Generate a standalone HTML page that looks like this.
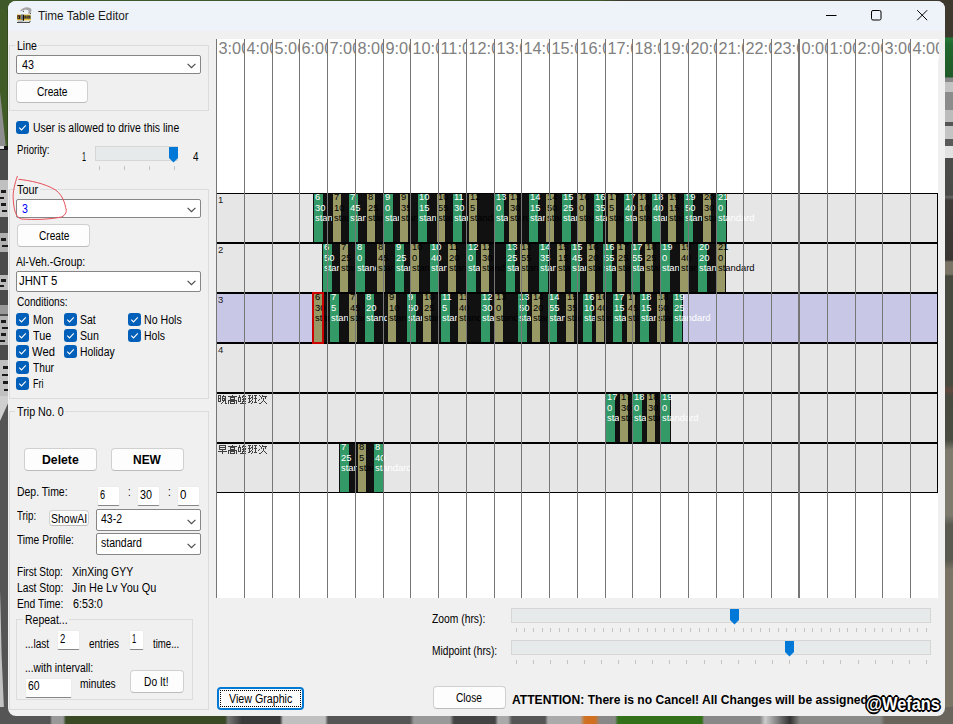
<!DOCTYPE html><html><head><meta charset="utf-8"><title>Time Table Editor</title><style>
html,body{margin:0;padding:0}
body{width:953px;height:724px;position:relative;overflow:hidden;background:#555;font-family:"Liberation Sans",sans-serif;font-size:12px;color:#000}
div,span,svg{position:absolute;box-sizing:border-box}
.t{white-space:pre;transform-origin:0 0;line-height:1}
.btn{background:#fdfdfd;border:1px solid #d0d0d0;border-bottom-color:#bcbcbc;border-radius:4px}
.cmb{background:#fff;border:1px solid #868686;border-radius:2px}
.inp{background:#fff;border:1px solid #ececec;border-bottom:1px solid #868686;border-radius:2px}
.cb{width:13px;height:13px;background:#005fb8;border-radius:3px}
.grp{border:1px solid #dcdcdc}
.hl{background:#767676;width:1px}
.trk{background:#e7eaea;border:1px solid #d6d6d6}
.tick{background:#c4c4c4;width:1px}
.row{left:216px;width:722px;height:50px;background:#e6e6e6;border:1px solid #000;overflow:hidden}
.tr{top:0;height:48px;background:#111;overflow:hidden}
.bx{left:1px;top:0;height:48px}
.tx{left:2px;top:-1.6px;font-size:9.4px;line-height:10.1px;white-space:pre}

</style></head><body>

<svg id="bgL" style="left:0;top:0" width="10" height="724" viewBox="0 0 10 724"><rect width="10" height="724" fill="#555"/><rect width="10" height="146" fill="#415c26"/><rect x="7" width="3" height="146" fill="#34491f"/><path d="M0 92L5.8 146H0Z" fill="#8e8e8e"/><rect y="146" width="10" height="4" fill="#111"/><rect y="146" width="4" height="3" fill="#ddd"/><rect y="150" width="10" height="250" fill="#4b4b4b"/><rect y="180" width="10" height="37" fill="#c0c0c0"/><rect x="1" y="190" width="5" height="3" fill="#1a1a1a"/><rect x="0" y="197" width="4" height="2" fill="#1a1a1a"/><rect x="1" y="203" width="5" height="3" fill="#1a1a1a"/><rect x="2" y="210" width="5" height="2" fill="#1a1a1a"/><rect y="233" width="10" height="19" fill="#b0b0b0"/><rect x="1" y="238" width="5" height="3" fill="#1a1a1a"/><rect x="2" y="245" width="6" height="2" fill="#1a1a1a"/><rect y="275" width="10" height="15" fill="#bbb"/><rect x="1" y="279" width="5" height="3" fill="#1a1a1a"/><rect x="0" y="285" width="4" height="2" fill="#1a1a1a"/><rect y="305" width="10" height="9" fill="#999"/><rect y="316" width="10" height="29" fill="#b4b4b4"/><rect x="1" y="320" width="5" height="3" fill="#1a1a1a"/><rect x="2" y="327" width="6" height="2" fill="#1a1a1a"/><rect x="1" y="333" width="5" height="3" fill="#1a1a1a"/><rect x="0" y="340" width="5" height="2" fill="#1a1a1a"/><rect y="360" width="10" height="36" fill="#c0c0c0"/><rect x="3" y="366" width="5" height="3" fill="#1a1a1a"/><rect x="2" y="374" width="6" height="2" fill="#1a1a1a"/><rect x="3" y="381" width="5" height="3" fill="#1a1a1a"/><rect x="4" y="389" width="4" height="2" fill="#1a1a1a"/><path d="M0 396H10V399L0 421Z" fill="#cfcfcf"/><path d="M0 590L.6 610L1.6 655L4.6 724H0Z" fill="#c2c2c2"/></svg>
<div id="bgR" style="left:944px;top:0;width:9px;height:724px;background:linear-gradient(to bottom,#3e392f 0px,#3e392f 37px,#267a38 38px,#22682e 44px,#1f5a28 77px,#8a8a8a 78px,#8a8a8a 82px,#c4c4c4 82px,#c4c4c4 92px,#8c8c8c 92px,#8c8c8c 110px,#bcbcbc 110px,#bcbcbc 122px,#555 122px,#555 126px,#c4c4c4 126px,#c4c4c4 139px,#5a5a5a 139px,#5a5a5a 146px,#e2e2e2 146px,#e2e2e2 158px,#4c4c4a 158px,#4a4a48 195px,#686664 197px,#403c3a 200px,#3a3634 260px,#7a7466 262px,#7a7466 274px,#484a40 276px,#484a40 385px,#63483e 390px,#484a40 396px,#4a4c42 440px,#7e7a6e 450px,#7e7a6e 515px,#5a5a50 525px,#5a5a50 560px,#7a7466 570px,#7a7466 724px)"></div>
<div id="bgB" style="left:0;top:707px;width:953px;height:17px;background:linear-gradient(to right,#555 0,#555 50px,#999 52px,#999 63px,#3a4a25 66px,#3a4a25 225px,#777 228px,#3a3a3a 242px,#3a3a3a 280px,#c0c0c0 283px,#c0c0c0 325px,#555 328px,#555 410px,#999 414px,#999 450px,#444 454px,#444 495px,#aaa 498px,#aaa 508px,#555 512px,#555 545px,#aaa 548px,#aaa 580px,#d07020 585px,#d07020 595px,#888 600px,#888 615px,#33701a 618px,#33701a 702px,#888 704px,#888 760px,#ccc 765px,#333 790px,#8a8a88 800px,#8a8a88 880px,#6a655c 885px,#6a655c 953px)"></div>
<div id="bgT" style="left:0;top:0;width:953px;height:9px;background:linear-gradient(to right,#40592a 0,#40592a 600px,#3e392f 620px,#3e392f 953px)"></div>
<div id="win" style="left:8px;top:1px;width:937px;height:715px;background:#f0f0f0;border-radius:8px;overflow:hidden">
<div style="left:0;top:0;width:937px;height:30px;background:#eef3f9"></div>
</div>
<svg style="left:820px;top:5px" width="115" height="22" viewBox="0 0 115 22"><g fill="none" stroke="#000" stroke-width="1"><path d="M6 10.5H16.5"/><rect x="51.5" y="5.5" width="9.5" height="9.5" rx="1.5"/><path d="M97.2 5.2L107.2 15.2M107.2 5.2L97.2 15.2"/></g></svg>
<svg style="left:16px;top:6px" width="17" height="18" viewBox="16 6 17 18"><path d="M20 10.8C22 8.2 25 6.9 27.5 7.2C30 7.5 31.8 8.8 31.5 10.5C31.3 11.8 30.5 12.8 29.5 13.6L27.8 13.4C28.8 12.3 29 11 28 10.3C26.5 9.2 23.5 9.8 21 11.4Z" fill="#a6a6a6"/><circle cx="23.4" cy="11.3" r=".6" fill="#333"/><circle cx="30.4" cy="13.3" r=".6" fill="#4a2a2a"/><rect x="17" y="14.6" width="13.6" height="5.6" fill="#d4aa2c"/><rect x="17.4" y="15.3" width="3" height="3.6" fill="#1c1a28"/><rect x="18.2" y="15.8" width="1" height="1" fill="#b03020"/><rect x="17.8" y="17.2" width="1" height="1" fill="#d8c030"/><rect x="21" y="14.4" width="1.8" height="5.2" fill="#6a7a98"/><rect x="22.9" y="14.8" width="1.1" height="6" fill="#0c0c0c"/><rect x="24.3" y="15.6" width="6.2" height="3.1" fill="#2c4034"/><rect x="24.6" y="16.6" width=".9" height="1.2" fill="#a03030"/><rect x="28" y="16.6" width="1" height="1.2" fill="#b03a30"/><rect x="26.6" y="15.2" width=".6" height="3.6" fill="#c0a030"/><rect x="24.3" y="18.9" width="6.4" height="1.3" fill="#e6c040"/><rect x="18" y="20.4" width="5" height="1.3" fill="#b8b8b8"/><path d="M17 22.4H29.6L30.2 21" fill="none" stroke="#222" stroke-width=".9"/></svg>
<div class="grp" style="left:9px;top:45px;width:200px;height:66px"></div>
<div class="grp" style="left:9px;top:189px;width:200px;height:210px"></div>
<div class="grp" style="left:9px;top:411px;width:200px;height:299px"></div>
<div class="grp" style="left:16px;top:619px;width:177px;height:81px"></div>
<div style="left:15px;top:40px;width:23px;height:12px;background:#f0f0f0"></div>
<div style="left:15px;top:184px;width:25px;height:12px;background:#f0f0f0"></div>
<div style="left:15px;top:405px;width:50px;height:12px;background:#f0f0f0"></div>
<div style="left:23px;top:613px;width:46px;height:12px;background:#f0f0f0"></div>
<div class="cmb" style="left:16px;top:55px;width:185px;height:19px"><svg style="right:4px;top:7px" width="9" height="6" viewBox="0 0 9 6"><path d="M.6 .8L4.5 4.7L8.4 .8" fill="none" stroke="#4a4a4a" stroke-width="1.15"/></svg></div>
<div class="cmb" style="left:16px;top:199px;width:185px;height:19px"><svg style="right:4px;top:7px" width="9" height="6" viewBox="0 0 9 6"><path d="M.6 .8L4.5 4.7L8.4 .8" fill="none" stroke="#4a4a4a" stroke-width="1.15"/></svg></div>
<div class="cmb" style="left:16px;top:271px;width:185px;height:21px"><svg style="right:4px;top:8px" width="9" height="6" viewBox="0 0 9 6"><path d="M.6 .8L4.5 4.7L8.4 .8" fill="none" stroke="#4a4a4a" stroke-width="1.15"/></svg></div>
<div class="cmb" style="left:96px;top:509px;width:105px;height:22px"><svg style="right:4px;top:9px" width="9" height="6" viewBox="0 0 9 6"><path d="M.6 .8L4.5 4.7L8.4 .8" fill="none" stroke="#4a4a4a" stroke-width="1.15"/></svg></div>
<div class="cmb" style="left:96px;top:533px;width:105px;height:22px"><svg style="right:4px;top:9px" width="9" height="6" viewBox="0 0 9 6"><path d="M.6 .8L4.5 4.7L8.4 .8" fill="none" stroke="#4a4a4a" stroke-width="1.15"/></svg></div>
<div class="btn" style="left:16px;top:80px;width:72px;height:23px;"></div>
<div class="btn" style="left:17px;top:224px;width:73px;height:23px;"></div>
<div class="btn" style="left:24px;top:448px;width:73px;height:23px;"></div>
<div class="btn" style="left:111px;top:448px;width:73px;height:23px;"></div>
<div class="btn" style="left:49px;top:510px;width:40px;height:16px;"></div>
<div class="btn" style="left:130px;top:670px;width:54px;height:23px;"></div>
<div class="btn" style="left:433px;top:686px;width:73px;height:23px;"></div>
<div style="left:217px;top:687px;width:87px;height:23px;background:#fdfdfd;border:2px solid #0078d4;border-radius:4px"></div>
<div style="left:220px;top:690px;width:81px;height:17px;border:1px dotted #000"></div>
<div class="inp" style="left:97px;top:486px;width:23px;height:20px"></div>
<div class="inp" style="left:137px;top:486px;width:23px;height:20px"></div>
<div class="inp" style="left:177px;top:486px;width:23px;height:20px"></div>
<div class="inp" style="left:57px;top:630px;width:23px;height:20px"></div>
<div class="inp" style="left:129px;top:630px;width:15px;height:20px"></div>
<div class="inp" style="left:25px;top:678px;width:47px;height:20px"></div>
<div class="cb" style="left:16px;top:121px"><svg width="13" height="13" viewBox="0 0 13 13" style="left:0;top:0"><path d="M3.2 6.7L5.5 9L9.8 4.4" fill="none" stroke="#fff" stroke-width="1.1"/></svg></div>
<div class="cb" style="left:16px;top:313px"><svg width="13" height="13" viewBox="0 0 13 13" style="left:0;top:0"><path d="M3.2 6.7L5.5 9L9.8 4.4" fill="none" stroke="#fff" stroke-width="1.1"/></svg></div>
<div class="cb" style="left:16px;top:329px"><svg width="13" height="13" viewBox="0 0 13 13" style="left:0;top:0"><path d="M3.2 6.7L5.5 9L9.8 4.4" fill="none" stroke="#fff" stroke-width="1.1"/></svg></div>
<div class="cb" style="left:16px;top:345px"><svg width="13" height="13" viewBox="0 0 13 13" style="left:0;top:0"><path d="M3.2 6.7L5.5 9L9.8 4.4" fill="none" stroke="#fff" stroke-width="1.1"/></svg></div>
<div class="cb" style="left:16px;top:361px"><svg width="13" height="13" viewBox="0 0 13 13" style="left:0;top:0"><path d="M3.2 6.7L5.5 9L9.8 4.4" fill="none" stroke="#fff" stroke-width="1.1"/></svg></div>
<div class="cb" style="left:16px;top:377px"><svg width="13" height="13" viewBox="0 0 13 13" style="left:0;top:0"><path d="M3.2 6.7L5.5 9L9.8 4.4" fill="none" stroke="#fff" stroke-width="1.1"/></svg></div>
<div class="cb" style="left:64px;top:313px"><svg width="13" height="13" viewBox="0 0 13 13" style="left:0;top:0"><path d="M3.2 6.7L5.5 9L9.8 4.4" fill="none" stroke="#fff" stroke-width="1.1"/></svg></div>
<div class="cb" style="left:64px;top:329px"><svg width="13" height="13" viewBox="0 0 13 13" style="left:0;top:0"><path d="M3.2 6.7L5.5 9L9.8 4.4" fill="none" stroke="#fff" stroke-width="1.1"/></svg></div>
<div class="cb" style="left:64px;top:345px"><svg width="13" height="13" viewBox="0 0 13 13" style="left:0;top:0"><path d="M3.2 6.7L5.5 9L9.8 4.4" fill="none" stroke="#fff" stroke-width="1.1"/></svg></div>
<div class="cb" style="left:128px;top:313px"><svg width="13" height="13" viewBox="0 0 13 13" style="left:0;top:0"><path d="M3.2 6.7L5.5 9L9.8 4.4" fill="none" stroke="#fff" stroke-width="1.1"/></svg></div>
<div class="cb" style="left:128px;top:329px"><svg width="13" height="13" viewBox="0 0 13 13" style="left:0;top:0"><path d="M3.2 6.7L5.5 9L9.8 4.4" fill="none" stroke="#fff" stroke-width="1.1"/></svg></div>
<div class="trk" style="left:95px;top:146px;width:83px;height:15px"></div>
<svg style="left:169px;top:147px" width="9" height="16" viewBox="0 0 9 16"><path d="M0 0H9V11L4.5 15.5L0 11Z" fill="#0078d7"/></svg>
<div class="tick" style="left:99px;top:166px;height:4px"></div>
<div class="tick" style="left:124px;top:166px;height:4px"></div>
<div class="tick" style="left:149px;top:166px;height:4px"></div>
<div class="tick" style="left:174px;top:166px;height:4px"></div>
<div class="trk" style="left:511px;top:608px;width:420px;height:15px"></div>
<div class="trk" style="left:511px;top:640px;width:420px;height:15px"></div>
<svg style="left:730px;top:609px" width="9" height="16" viewBox="0 0 9 16"><path d="M0 0H9V11L4.5 15.5L0 11Z" fill="#0078d7"/></svg>
<svg style="left:785px;top:641px" width="9" height="16" viewBox="0 0 9 16"><path d="M0 0H9V11L4.5 15.5L0 11Z" fill="#0078d7"/></svg>
<div class="tick" style="left:516px;top:628px;height:4px"></div>
<div class="tick" style="left:524px;top:628px;height:4px"></div>
<div class="tick" style="left:533px;top:628px;height:4px"></div>
<div class="tick" style="left:542px;top:628px;height:4px"></div>
<div class="tick" style="left:550px;top:628px;height:4px"></div>
<div class="tick" style="left:559px;top:628px;height:4px"></div>
<div class="tick" style="left:568px;top:628px;height:4px"></div>
<div class="tick" style="left:577px;top:628px;height:4px"></div>
<div class="tick" style="left:585px;top:628px;height:4px"></div>
<div class="tick" style="left:594px;top:628px;height:4px"></div>
<div class="tick" style="left:603px;top:628px;height:4px"></div>
<div class="tick" style="left:612px;top:628px;height:4px"></div>
<div class="tick" style="left:620px;top:628px;height:4px"></div>
<div class="tick" style="left:629px;top:628px;height:4px"></div>
<div class="tick" style="left:638px;top:628px;height:4px"></div>
<div class="tick" style="left:647px;top:628px;height:4px"></div>
<div class="tick" style="left:655px;top:628px;height:4px"></div>
<div class="tick" style="left:664px;top:628px;height:4px"></div>
<div class="tick" style="left:673px;top:628px;height:4px"></div>
<div class="tick" style="left:681px;top:628px;height:4px"></div>
<div class="tick" style="left:690px;top:628px;height:4px"></div>
<div class="tick" style="left:699px;top:628px;height:4px"></div>
<div class="tick" style="left:708px;top:628px;height:4px"></div>
<div class="tick" style="left:716px;top:628px;height:4px"></div>
<div class="tick" style="left:725px;top:628px;height:4px"></div>
<div class="tick" style="left:734px;top:628px;height:4px"></div>
<div class="tick" style="left:743px;top:628px;height:4px"></div>
<div class="tick" style="left:751px;top:628px;height:4px"></div>
<div class="tick" style="left:760px;top:628px;height:4px"></div>
<div class="tick" style="left:769px;top:628px;height:4px"></div>
<div class="tick" style="left:778px;top:628px;height:4px"></div>
<div class="tick" style="left:786px;top:628px;height:4px"></div>
<div class="tick" style="left:795px;top:628px;height:4px"></div>
<div class="tick" style="left:804px;top:628px;height:4px"></div>
<div class="tick" style="left:812px;top:628px;height:4px"></div>
<div class="tick" style="left:821px;top:628px;height:4px"></div>
<div class="tick" style="left:830px;top:628px;height:4px"></div>
<div class="tick" style="left:839px;top:628px;height:4px"></div>
<div class="tick" style="left:847px;top:628px;height:4px"></div>
<div class="tick" style="left:856px;top:628px;height:4px"></div>
<div class="tick" style="left:865px;top:628px;height:4px"></div>
<div class="tick" style="left:874px;top:628px;height:4px"></div>
<div class="tick" style="left:882px;top:628px;height:4px"></div>
<div class="tick" style="left:891px;top:628px;height:4px"></div>
<div class="tick" style="left:900px;top:628px;height:4px"></div>
<div class="tick" style="left:909px;top:628px;height:4px"></div>
<div class="tick" style="left:917px;top:628px;height:4px"></div>
<div class="tick" style="left:926px;top:628px;height:4px"></div>
<div class="tick" style="left:516px;top:660px;height:4px"></div>
<div class="tick" style="left:533px;top:660px;height:4px"></div>
<div class="tick" style="left:550px;top:660px;height:4px"></div>
<div class="tick" style="left:567px;top:660px;height:4px"></div>
<div class="tick" style="left:584px;top:660px;height:4px"></div>
<div class="tick" style="left:601px;top:660px;height:4px"></div>
<div class="tick" style="left:618px;top:660px;height:4px"></div>
<div class="tick" style="left:635px;top:660px;height:4px"></div>
<div class="tick" style="left:652px;top:660px;height:4px"></div>
<div class="tick" style="left:669px;top:660px;height:4px"></div>
<div class="tick" style="left:686px;top:660px;height:4px"></div>
<div class="tick" style="left:704px;top:660px;height:4px"></div>
<div class="tick" style="left:721px;top:660px;height:4px"></div>
<div class="tick" style="left:738px;top:660px;height:4px"></div>
<div class="tick" style="left:755px;top:660px;height:4px"></div>
<div class="tick" style="left:772px;top:660px;height:4px"></div>
<div class="tick" style="left:789px;top:660px;height:4px"></div>
<div class="tick" style="left:806px;top:660px;height:4px"></div>
<div class="tick" style="left:823px;top:660px;height:4px"></div>
<div class="tick" style="left:840px;top:660px;height:4px"></div>
<div class="tick" style="left:858px;top:660px;height:4px"></div>
<div class="tick" style="left:875px;top:660px;height:4px"></div>
<div class="tick" style="left:892px;top:660px;height:4px"></div>
<div class="tick" style="left:909px;top:660px;height:4px"></div>
<div class="tick" style="left:926px;top:660px;height:4px"></div>
<svg style="left:10px;top:172px" width="62" height="52" viewBox="10 172 62 52"><path d="M17.4 176C15 183 12.6 192 13.2 199C13.8 210 16 218 21.6 219C34 220 50 219.5 61.5 217C66 215 67 211 65.7 207.7C64 199 60.5 193.5 55.2 189.8C45 183.5 30 180.5 18.5 179.3" fill="none" stroke="#e8505a" stroke-width="1"/></svg>
<div id="grid" style="left:217px;top:39px;width:721px;height:559px;background:#fff"></div>
<div style="left:217px;top:39px;width:28px;height:20px;overflow:hidden;background:#fff"><span style="left:1.5px;top:0.5px;font-size:16.3px;line-height:16px;color:#808080;white-space:pre">3:00</span></div>
<div style="left:245px;top:39px;width:28px;height:20px;overflow:hidden;background:#fff"><span style="left:1.5px;top:0.5px;font-size:16.3px;line-height:16px;color:#808080;white-space:pre">4:00</span></div>
<div style="left:273px;top:39px;width:27px;height:20px;overflow:hidden;background:#fff"><span style="left:1.5px;top:0.5px;font-size:16.3px;line-height:16px;color:#808080;white-space:pre">5:00</span></div>
<div style="left:300px;top:39px;width:28px;height:20px;overflow:hidden;background:#fff"><span style="left:1.5px;top:0.5px;font-size:16.3px;line-height:16px;color:#808080;white-space:pre">6:00</span></div>
<div style="left:328px;top:39px;width:28px;height:20px;overflow:hidden;background:#fff"><span style="left:1.5px;top:0.5px;font-size:16.3px;line-height:16px;color:#808080;white-space:pre">7:00</span></div>
<div style="left:356px;top:39px;width:28px;height:20px;overflow:hidden;background:#fff"><span style="left:1.5px;top:0.5px;font-size:16.3px;line-height:16px;color:#808080;white-space:pre">8:00</span></div>
<div style="left:384px;top:39px;width:27px;height:20px;overflow:hidden;background:#fff"><span style="left:1.5px;top:0.5px;font-size:16.3px;line-height:16px;color:#808080;white-space:pre">9:00</span></div>
<div style="left:411px;top:39px;width:28px;height:20px;overflow:hidden;background:#fff"><span style="left:1.5px;top:0.5px;font-size:16.3px;line-height:16px;color:#808080;white-space:pre">10:00</span></div>
<div style="left:439px;top:39px;width:28px;height:20px;overflow:hidden;background:#fff"><span style="left:1.5px;top:0.5px;font-size:16.3px;line-height:16px;color:#808080;white-space:pre">11:00</span></div>
<div style="left:467px;top:39px;width:28px;height:20px;overflow:hidden;background:#fff"><span style="left:1.5px;top:0.5px;font-size:16.3px;line-height:16px;color:#808080;white-space:pre">12:00</span></div>
<div style="left:495px;top:39px;width:27px;height:20px;overflow:hidden;background:#fff"><span style="left:1.5px;top:0.5px;font-size:16.3px;line-height:16px;color:#808080;white-space:pre">13:00</span></div>
<div style="left:522px;top:39px;width:28px;height:20px;overflow:hidden;background:#fff"><span style="left:1.5px;top:0.5px;font-size:16.3px;line-height:16px;color:#808080;white-space:pre">14:00</span></div>
<div style="left:550px;top:39px;width:28px;height:20px;overflow:hidden;background:#fff"><span style="left:1.5px;top:0.5px;font-size:16.3px;line-height:16px;color:#808080;white-space:pre">15:00</span></div>
<div style="left:578px;top:39px;width:28px;height:20px;overflow:hidden;background:#fff"><span style="left:1.5px;top:0.5px;font-size:16.3px;line-height:16px;color:#808080;white-space:pre">16:00</span></div>
<div style="left:606px;top:39px;width:27px;height:20px;overflow:hidden;background:#fff"><span style="left:1.5px;top:0.5px;font-size:16.3px;line-height:16px;color:#808080;white-space:pre">17:00</span></div>
<div style="left:633px;top:39px;width:28px;height:20px;overflow:hidden;background:#fff"><span style="left:1.5px;top:0.5px;font-size:16.3px;line-height:16px;color:#808080;white-space:pre">18:00</span></div>
<div style="left:661px;top:39px;width:28px;height:20px;overflow:hidden;background:#fff"><span style="left:1.5px;top:0.5px;font-size:16.3px;line-height:16px;color:#808080;white-space:pre">19:00</span></div>
<div style="left:689px;top:39px;width:28px;height:20px;overflow:hidden;background:#fff"><span style="left:1.5px;top:0.5px;font-size:16.3px;line-height:16px;color:#808080;white-space:pre">20:00</span></div>
<div style="left:717px;top:39px;width:27px;height:20px;overflow:hidden;background:#fff"><span style="left:1.5px;top:0.5px;font-size:16.3px;line-height:16px;color:#808080;white-space:pre">21:00</span></div>
<div style="left:744px;top:39px;width:28px;height:20px;overflow:hidden;background:#fff"><span style="left:1.5px;top:0.5px;font-size:16.3px;line-height:16px;color:#808080;white-space:pre">22:00</span></div>
<div style="left:772px;top:39px;width:28px;height:20px;overflow:hidden;background:#fff"><span style="left:1.5px;top:0.5px;font-size:16.3px;line-height:16px;color:#808080;white-space:pre">23:00</span></div>
<div style="left:800px;top:39px;width:28px;height:20px;overflow:hidden;background:#fff"><span style="left:1.5px;top:0.5px;font-size:16.3px;line-height:16px;color:#808080;white-space:pre">0:00</span></div>
<div style="left:828px;top:39px;width:28px;height:20px;overflow:hidden;background:#fff"><span style="left:1.5px;top:0.5px;font-size:16.3px;line-height:16px;color:#808080;white-space:pre">1:00</span></div>
<div style="left:856px;top:39px;width:27px;height:20px;overflow:hidden;background:#fff"><span style="left:1.5px;top:0.5px;font-size:16.3px;line-height:16px;color:#808080;white-space:pre">2:00</span></div>
<div style="left:883px;top:39px;width:28px;height:20px;overflow:hidden;background:#fff"><span style="left:1.5px;top:0.5px;font-size:16.3px;line-height:16px;color:#808080;white-space:pre">3:00</span></div>
<div style="left:911px;top:39px;width:28px;height:20px;overflow:hidden;background:#fff"><span style="left:1.5px;top:0.5px;font-size:16.3px;line-height:16px;color:#808080;white-space:pre">4:00</span></div>
<div class="row" style="top:193px;background:#e6e6e6">
<span style="left:1px;top:1px;font-size:9.5px;line-height:10px;color:#222">1</span>
<div class="tr" style="left:96px;width:19px"><div class="bx" style="left:1px;width:9px;background:#339966;"></div><span class="tx" style="color:#fff">6
30
standard</span></div>
<div class="tr" style="left:115px;width:16px"><div class="bx" style="left:1px;width:8px;background:#999966;"></div><span class="tx" style="color:#000">7
10
standard</span></div>
<div class="tr" style="left:131px;width:18px"><div class="bx" style="left:1px;width:9px;background:#339966;"></div><span class="tx" style="color:#fff">7
45
standard</span></div>
<div class="tr" style="left:149px;width:17px"><div class="bx" style="left:1px;width:8px;background:#999966;"></div><span class="tx" style="color:#000">8
25
standard</span></div>
<div class="tr" style="left:166px;width:16px"><div class="bx" style="left:1px;width:9px;background:#339966;"></div><span class="tx" style="color:#fff">9
0
standard</span></div>
<div class="tr" style="left:182px;width:18px"><div class="bx" style="left:1px;width:8px;background:#999966;"></div><span class="tx" style="color:#000">9
35
standard</span></div>
<div class="tr" style="left:200px;width:19px"><div class="bx" style="left:1px;width:9px;background:#339966;"></div><span class="tx" style="color:#fff">10
15
standard</span></div>
<div class="tr" style="left:219px;width:16px"><div class="bx" style="left:1px;width:8px;background:#999966;"></div><span class="tx" style="color:#000">10
55
standard</span></div>
<div class="tr" style="left:235px;width:16px"><div class="bx" style="left:1px;width:9px;background:#339966;"></div><span class="tx" style="color:#fff">11
30
standard</span></div>
<div class="tr" style="left:251px;width:26px"><div class="bx" style="left:1px;width:8px;background:#999966;"></div><span class="tx" style="color:#000">12
5
standard</span></div>
<div class="tr" style="left:277px;width:14px"><div class="bx" style="left:1px;width:9px;background:#339966;"></div><span class="tx" style="color:#fff">13
0
standard</span></div>
<div class="tr" style="left:291px;width:20px"><div class="bx" style="left:1px;width:8px;background:#999966;"></div><span class="tx" style="color:#000">13
30
standard</span></div>
<div class="tr" style="left:311px;width:17px"><div class="bx" style="left:1px;width:9px;background:#339966;"></div><span class="tx" style="color:#fff">14
15
standard</span></div>
<div class="tr" style="left:328px;width:16px"><div class="bx" style="left:1px;width:8px;background:#999966;"></div><span class="tx" style="color:#000">14
50
standard</span></div>
<div class="tr" style="left:344px;width:16px"><div class="bx" style="left:1px;width:9px;background:#339966;"></div><span class="tx" style="color:#fff">15
25
standard</span></div>
<div class="tr" style="left:360px;width:16px"><div class="bx" style="left:1px;width:8px;background:#999966;"></div><span class="tx" style="color:#000">16
0
standard</span></div>
<div class="tr" style="left:376px;width:14px"><div class="bx" style="left:1px;width:9px;background:#339966;"></div><span class="tx" style="color:#fff">16
35
standard</span></div>
<div class="tr" style="left:390px;width:16px"><div class="bx" style="left:1px;width:8px;background:#999966;"></div><span class="tx" style="color:#000">17
5
standard</span></div>
<div class="tr" style="left:406px;width:14px"><div class="bx" style="left:1px;width:9px;background:#339966;"></div><span class="tx" style="color:#fff">17
40
standard</span></div>
<div class="tr" style="left:420px;width:14px"><div class="bx" style="left:1px;width:8px;background:#999966;"></div><span class="tx" style="color:#000">18
10
standard</span></div>
<div class="tr" style="left:434px;width:16px"><div class="bx" style="left:1px;width:9px;background:#339966;"></div><span class="tx" style="color:#fff">18
40
standard</span></div>
<div class="tr" style="left:450px;width:16px"><div class="bx" style="left:1px;width:8px;background:#999966;"></div><span class="tx" style="color:#000">19
15
standard</span></div>
<div class="tr" style="left:466px;width:19px"><div class="bx" style="left:1px;width:9px;background:#339966;"></div><span class="tx" style="color:#fff">19
50
standard</span></div>
<div class="tr" style="left:485px;width:14px"><div class="bx" style="left:1px;width:8px;background:#999966;"></div><span class="tx" style="color:#000">20
30
standard</span></div>
<div class="tr" style="left:499px;width:11px;overflow:visible"><div class="bx" style="left:1px;width:9px;background:#339966;"></div><span class="tx" style="color:#fff">21
0
standard</span></div>
</div>
<div class="row" style="top:243px;background:#e6e6e6">
<span style="left:1px;top:1px;font-size:9.5px;line-height:10px;color:#222">2</span>
<div class="tr" style="left:105px;width:17px"><div class="bx" style="left:1px;width:9px;background:#339966;"></div><span class="tx" style="color:#fff">6
50
standard</span></div>
<div class="tr" style="left:122px;width:16px"><div class="bx" style="left:1px;width:8px;background:#999966;"></div><span class="tx" style="color:#000">7
25
standard</span></div>
<div class="tr" style="left:138px;width:21px"><div class="bx" style="left:1px;width:9px;background:#339966;"></div><span class="tx" style="color:#fff">8
0
standard</span></div>
<div class="tr" style="left:159px;width:18px"><div class="bx" style="left:1px;width:8px;background:#999966;"></div><span class="tx" style="color:#000">8
45
standard</span></div>
<div class="tr" style="left:177px;width:16px"><div class="bx" style="left:1px;width:9px;background:#339966;"></div><span class="tx" style="color:#fff">9
25
standard</span></div>
<div class="tr" style="left:193px;width:19px"><div class="bx" style="left:1px;width:8px;background:#999966;"></div><span class="tx" style="color:#000">10
0
standard</span></div>
<div class="tr" style="left:212px;width:18px"><div class="bx" style="left:1px;width:9px;background:#339966;"></div><span class="tx" style="color:#fff">10
40
standard</span></div>
<div class="tr" style="left:230px;width:19px"><div class="bx" style="left:1px;width:8px;background:#999966;"></div><span class="tx" style="color:#000">11
20
standard</span></div>
<div class="tr" style="left:249px;width:14px"><div class="bx" style="left:1px;width:9px;background:#339966;"></div><span class="tx" style="color:#fff">12
0
standard</span></div>
<div class="tr" style="left:263px;width:25px"><div class="bx" style="left:1px;width:8px;background:#999966;"></div><span class="tx" style="color:#000">12
30
standard</span></div>
<div class="tr" style="left:288px;width:14px"><div class="bx" style="left:1px;width:9px;background:#339966;"></div><span class="tx" style="color:#fff">13
25
standard</span></div>
<div class="tr" style="left:302px;width:19px"><div class="bx" style="left:1px;width:8px;background:#999966;"></div><span class="tx" style="color:#000">13
55
standard</span></div>
<div class="tr" style="left:321px;width:18px"><div class="bx" style="left:1px;width:9px;background:#339966;"></div><span class="tx" style="color:#fff">14
35
standard</span></div>
<div class="tr" style="left:339px;width:14px"><div class="bx" style="left:1px;width:8px;background:#999966;"></div><span class="tx" style="color:#000">15
15
standard</span></div>
<div class="tr" style="left:353px;width:16px"><div class="bx" style="left:1px;width:9px;background:#339966;"></div><span class="tx" style="color:#fff">15
45
standard</span></div>
<div class="tr" style="left:369px;width:16px"><div class="bx" style="left:1px;width:8px;background:#999966;"></div><span class="tx" style="color:#000">16
20
standard</span></div>
<div class="tr" style="left:385px;width:14px"><div class="bx" style="left:1px;width:9px;background:#339966;"></div><span class="tx" style="color:#fff">16
55
standard</span></div>
<div class="tr" style="left:399px;width:14px"><div class="bx" style="left:1px;width:8px;background:#999966;"></div><span class="tx" style="color:#000">17
25
standard</span></div>
<div class="tr" style="left:413px;width:14px"><div class="bx" style="left:1px;width:9px;background:#339966;"></div><span class="tx" style="color:#fff">17
55
standard</span></div>
<div class="tr" style="left:427px;width:16px"><div class="bx" style="left:1px;width:8px;background:#999966;"></div><span class="tx" style="color:#000">18
25
standard</span></div>
<div class="tr" style="left:443px;width:19px"><div class="bx" style="left:1px;width:9px;background:#339966;"></div><span class="tx" style="color:#fff">19
0
standard</span></div>
<div class="tr" style="left:462px;width:18px"><div class="bx" style="left:1px;width:8px;background:#999966;"></div><span class="tx" style="color:#000">19
40
standard</span></div>
<div class="tr" style="left:480px;width:19px"><div class="bx" style="left:1px;width:9px;background:#339966;"></div><span class="tx" style="color:#fff">20
20
standard</span></div>
<div class="tr" style="left:499px;width:10px;overflow:visible"><div class="bx" style="left:1px;width:8px;background:#999966;"></div><span class="tx" style="color:#000">21
0
standard</span></div>
</div>
<div class="row" style="top:293px;background:#c8c8e6">
<span style="left:1px;top:1px;font-size:9.5px;line-height:10px;color:#222">3</span>
<div class="tr" style="left:96px;width:16px"><div class="bx" style="left:1px;width:8px;background:#999966;"></div><span class="tx" style="color:#000">6
30
standard</span></div>
<div class="tr" style="left:112px;width:19px"><div class="bx" style="left:1px;width:9px;background:#339966;"></div><span class="tx" style="color:#fff">7
5
standard</span></div>
<div class="tr" style="left:131px;width:16px"><div class="bx" style="left:1px;width:8px;background:#999966;"></div><span class="tx" style="color:#000">7
45
standard</span></div>
<div class="tr" style="left:147px;width:23px"><div class="bx" style="left:1px;width:9px;background:#339966;"></div><span class="tx" style="color:#fff">8
20
standard</span></div>
<div class="tr" style="left:170px;width:19px"><div class="bx" style="left:1px;width:8px;background:#999966;"></div><span class="tx" style="color:#000">9
10
standard</span></div>
<div class="tr" style="left:189px;width:16px"><div class="bx" style="left:1px;width:9px;background:#339966;"></div><span class="tx" style="color:#fff">9
50
standard</span></div>
<div class="tr" style="left:205px;width:18px"><div class="bx" style="left:1px;width:8px;background:#999966;"></div><span class="tx" style="color:#000">10
25
standard</span></div>
<div class="tr" style="left:223px;width:17px"><div class="bx" style="left:1px;width:9px;background:#339966;"></div><span class="tx" style="color:#fff">11
5
standard</span></div>
<div class="tr" style="left:240px;width:23px"><div class="bx" style="left:1px;width:8px;background:#999966;"></div><span class="tx" style="color:#000">11
40
standard</span></div>
<div class="tr" style="left:263px;width:14px"><div class="bx" style="left:1px;width:9px;background:#339966;"></div><span class="tx" style="color:#fff">12
30
standard</span></div>
<div class="tr" style="left:277px;width:23px"><div class="bx" style="left:1px;width:8px;background:#999966;"></div><span class="tx" style="color:#000">13
0
standard</span></div>
<div class="tr" style="left:300px;width:14px"><div class="bx" style="left:1px;width:9px;background:#339966;"></div><span class="tx" style="color:#fff">13
50
standard</span></div>
<div class="tr" style="left:314px;width:16px"><div class="bx" style="left:1px;width:8px;background:#999966;"></div><span class="tx" style="color:#000">14
20
standard</span></div>
<div class="tr" style="left:330px;width:18px"><div class="bx" style="left:1px;width:9px;background:#339966;"></div><span class="tx" style="color:#fff">14
55
standard</span></div>
<div class="tr" style="left:348px;width:17px"><div class="bx" style="left:1px;width:8px;background:#999966;"></div><span class="tx" style="color:#000">15
35
standard</span></div>
<div class="tr" style="left:365px;width:13px"><div class="bx" style="left:1px;width:9px;background:#339966;"></div><span class="tx" style="color:#fff">16
10
standard</span></div>
<div class="tr" style="left:378px;width:17px"><div class="bx" style="left:1px;width:8px;background:#999966;"></div><span class="tx" style="color:#000">16
40
standard</span></div>
<div class="tr" style="left:395px;width:14px"><div class="bx" style="left:1px;width:9px;background:#339966;"></div><span class="tx" style="color:#fff">17
15
standard</span></div>
<div class="tr" style="left:409px;width:13px"><div class="bx" style="left:1px;width:8px;background:#999966;"></div><span class="tx" style="color:#000">17
45
standard</span></div>
<div class="tr" style="left:422px;width:17px"><div class="bx" style="left:1px;width:9px;background:#339966;"></div><span class="tx" style="color:#fff">18
15
standard</span></div>
<div class="tr" style="left:439px;width:16px"><div class="bx" style="left:1px;width:8px;background:#999966;"></div><span class="tx" style="color:#000">18
50
standard</span></div>
<div class="tr" style="left:455px;width:11px;overflow:visible"><div class="bx" style="left:1px;width:9px;background:#339966;"></div><span class="tx" style="color:#fff">19
25
standard</span></div>
</div>
<div class="row" style="top:343px;background:#e6e6e6">
<span style="left:1px;top:1px;font-size:9.5px;line-height:10px;color:#222">4</span>
</div>
<div class="row" style="top:393px;background:#e6e6e6">
<span style="left:1px;top:1px;font-size:9.5px;line-height:10px;color:#222"></span>
<svg style="left:1px;top:1px;opacity:.72" width="9" height="9" viewBox="0 0 9 9"><path d="M0 0h1v1h-1zM1 0h1v1h-1zM2 0h1v1h-1zM5 0h1v1h-1zM0 1h1v1h-1zM2 1h1v1h-1zM4 1h1v1h-1zM5 1h1v1h-1zM6 1h1v1h-1zM7 1h1v1h-1zM0 2h1v1h-1zM2 2h1v1h-1zM4 2h1v1h-1zM7 2h1v1h-1zM0 3h1v1h-1zM1 3h1v1h-1zM2 3h1v1h-1zM4 3h1v1h-1zM5 3h1v1h-1zM6 3h1v1h-1zM7 3h1v1h-1zM0 4h1v1h-1zM2 4h1v1h-1zM4 4h1v1h-1zM6 4h1v1h-1zM7 4h1v1h-1zM0 5h1v1h-1zM2 5h1v1h-1zM4 5h1v1h-1zM5 5h1v1h-1zM6 5h1v1h-1zM7 5h1v1h-1zM0 6h1v1h-1zM1 6h1v1h-1zM2 6h1v1h-1zM5 6h1v1h-1zM7 6h1v1h-1zM4 7h1v1h-1zM7 7h1v1h-1zM3 8h1v1h-1zM7 8h1v1h-1zM8 8h1v1h-1z" fill="#000"/></svg>
<svg style="left:11px;top:1px;opacity:.72" width="9" height="9" viewBox="0 0 9 9"><path d="M4 0h1v1h-1zM0 1h1v1h-1zM1 1h1v1h-1zM2 1h1v1h-1zM3 1h1v1h-1zM4 1h1v1h-1zM5 1h1v1h-1zM6 1h1v1h-1zM7 1h1v1h-1zM8 1h1v1h-1zM2 2h1v1h-1zM3 2h1v1h-1zM4 2h1v1h-1zM5 2h1v1h-1zM6 2h1v1h-1zM2 3h1v1h-1zM6 3h1v1h-1zM2 4h1v1h-1zM3 4h1v1h-1zM4 4h1v1h-1zM5 4h1v1h-1zM6 4h1v1h-1zM0 5h1v1h-1zM1 5h1v1h-1zM2 5h1v1h-1zM3 5h1v1h-1zM4 5h1v1h-1zM5 5h1v1h-1zM6 5h1v1h-1zM7 5h1v1h-1zM8 5h1v1h-1zM0 6h1v1h-1zM2 6h1v1h-1zM3 6h1v1h-1zM4 6h1v1h-1zM5 6h1v1h-1zM6 6h1v1h-1zM8 6h1v1h-1zM0 7h1v1h-1zM2 7h1v1h-1zM6 7h1v1h-1zM8 7h1v1h-1zM0 8h1v1h-1zM2 8h1v1h-1zM3 8h1v1h-1zM4 8h1v1h-1zM5 8h1v1h-1zM6 8h1v1h-1zM8 8h1v1h-1z" fill="#000"/></svg>
<svg style="left:21px;top:1px;opacity:.72" width="9" height="9" viewBox="0 0 9 9"><path d="M1 0h1v1h-1zM5 0h1v1h-1zM1 1h1v1h-1zM4 1h1v1h-1zM5 1h1v1h-1zM6 1h1v1h-1zM7 1h1v1h-1zM0 2h1v1h-1zM1 2h1v1h-1zM2 2h1v1h-1zM4 2h1v1h-1zM6 2h1v1h-1zM0 3h1v1h-1zM2 3h1v1h-1zM5 3h1v1h-1zM7 3h1v1h-1zM0 4h1v1h-1zM2 4h1v1h-1zM4 4h1v1h-1zM5 4h1v1h-1zM6 4h1v1h-1zM7 4h1v1h-1zM0 5h1v1h-1zM2 5h1v1h-1zM5 5h1v1h-1zM0 6h1v1h-1zM1 6h1v1h-1zM2 6h1v1h-1zM4 6h1v1h-1zM5 6h1v1h-1zM6 6h1v1h-1zM7 6h1v1h-1zM4 7h1v1h-1zM6 7h1v1h-1zM2 8h1v1h-1zM3 8h1v1h-1zM4 8h1v1h-1zM5 8h1v1h-1zM6 8h1v1h-1zM7 8h1v1h-1z" fill="#000"/></svg>
<svg style="left:31px;top:1px;opacity:.72" width="9" height="9" viewBox="0 0 9 9"><path d="M0 0h1v1h-1zM1 0h1v1h-1zM2 0h1v1h-1zM4 0h1v1h-1zM6 0h1v1h-1zM7 0h1v1h-1zM8 0h1v1h-1zM1 1h1v1h-1zM4 1h1v1h-1zM7 1h1v1h-1zM1 2h1v1h-1zM3 2h1v1h-1zM4 2h1v1h-1zM7 2h1v1h-1zM0 3h1v1h-1zM1 3h1v1h-1zM2 3h1v1h-1zM4 3h1v1h-1zM6 3h1v1h-1zM7 3h1v1h-1zM8 3h1v1h-1zM1 4h1v1h-1zM4 4h1v1h-1zM7 4h1v1h-1zM1 5h1v1h-1zM3 5h1v1h-1zM7 5h1v1h-1zM1 6h1v1h-1zM2 6h1v1h-1zM4 6h1v1h-1zM7 6h1v1h-1zM0 7h1v1h-1zM1 7h1v1h-1zM4 7h1v1h-1zM6 7h1v1h-1zM7 7h1v1h-1zM8 7h1v1h-1zM3 8h1v1h-1z" fill="#000"/></svg>
<svg style="left:41px;top:1px;opacity:.72" width="9" height="9" viewBox="0 0 9 9"><path d="M1 0h1v1h-1zM4 0h1v1h-1zM2 1h1v1h-1zM4 1h1v1h-1zM5 1h1v1h-1zM6 1h1v1h-1zM7 1h1v1h-1zM8 1h1v1h-1zM3 2h1v1h-1zM7 2h1v1h-1zM3 3h1v1h-1zM5 3h1v1h-1zM7 3h1v1h-1zM1 4h1v1h-1zM5 4h1v1h-1zM0 5h1v1h-1zM5 5h1v1h-1zM4 6h1v1h-1zM6 6h1v1h-1zM3 7h1v1h-1zM7 7h1v1h-1zM1 8h1v1h-1zM2 8h1v1h-1zM8 8h1v1h-1z" fill="#000"/></svg>
<div class="tr" style="left:388px;width:14px"><div class="bx" style="left:1px;width:9px;background:#339966;"></div><span class="tx" style="color:#fff">17
0
standard</span></div>
<div class="tr" style="left:402px;width:13px"><div class="bx" style="left:1px;width:8px;background:#999966;"></div><span class="tx" style="color:#000">17
30
standard</span></div>
<div class="tr" style="left:415px;width:14px"><div class="bx" style="left:1px;width:9px;background:#339966;"></div><span class="tx" style="color:#fff">18
0
standard</span></div>
<div class="tr" style="left:429px;width:14px"><div class="bx" style="left:1px;width:8px;background:#999966;"></div><span class="tx" style="color:#000">18
30
standard</span></div>
<div class="tr" style="left:443px;width:11px;overflow:visible"><div class="bx" style="left:1px;width:9px;background:#339966;"></div><span class="tx" style="color:#fff">19
0
standard</span></div>
</div>
<div class="row" style="top:443px;background:#e6e6e6">
<span style="left:1px;top:1px;font-size:9.5px;line-height:10px;color:#222"></span>
<svg style="left:1px;top:1px;opacity:.72" width="9" height="9" viewBox="0 0 9 9"><path d="M1 0h1v1h-1zM2 0h1v1h-1zM3 0h1v1h-1zM4 0h1v1h-1zM5 0h1v1h-1zM6 0h1v1h-1zM7 0h1v1h-1zM1 1h1v1h-1zM7 1h1v1h-1zM1 2h1v1h-1zM2 2h1v1h-1zM3 2h1v1h-1zM4 2h1v1h-1zM5 2h1v1h-1zM6 2h1v1h-1zM7 2h1v1h-1zM1 3h1v1h-1zM7 3h1v1h-1zM1 4h1v1h-1zM2 4h1v1h-1zM3 4h1v1h-1zM4 4h1v1h-1zM5 4h1v1h-1zM6 4h1v1h-1zM7 4h1v1h-1zM4 5h1v1h-1zM0 6h1v1h-1zM1 6h1v1h-1zM2 6h1v1h-1zM3 6h1v1h-1zM4 6h1v1h-1zM5 6h1v1h-1zM6 6h1v1h-1zM7 6h1v1h-1zM8 6h1v1h-1zM4 7h1v1h-1zM4 8h1v1h-1z" fill="#000"/></svg>
<svg style="left:11px;top:1px;opacity:.72" width="9" height="9" viewBox="0 0 9 9"><path d="M4 0h1v1h-1zM0 1h1v1h-1zM1 1h1v1h-1zM2 1h1v1h-1zM3 1h1v1h-1zM4 1h1v1h-1zM5 1h1v1h-1zM6 1h1v1h-1zM7 1h1v1h-1zM8 1h1v1h-1zM2 2h1v1h-1zM3 2h1v1h-1zM4 2h1v1h-1zM5 2h1v1h-1zM6 2h1v1h-1zM2 3h1v1h-1zM6 3h1v1h-1zM2 4h1v1h-1zM3 4h1v1h-1zM4 4h1v1h-1zM5 4h1v1h-1zM6 4h1v1h-1zM0 5h1v1h-1zM1 5h1v1h-1zM2 5h1v1h-1zM3 5h1v1h-1zM4 5h1v1h-1zM5 5h1v1h-1zM6 5h1v1h-1zM7 5h1v1h-1zM8 5h1v1h-1zM0 6h1v1h-1zM2 6h1v1h-1zM3 6h1v1h-1zM4 6h1v1h-1zM5 6h1v1h-1zM6 6h1v1h-1zM8 6h1v1h-1zM0 7h1v1h-1zM2 7h1v1h-1zM6 7h1v1h-1zM8 7h1v1h-1zM0 8h1v1h-1zM2 8h1v1h-1zM3 8h1v1h-1zM4 8h1v1h-1zM5 8h1v1h-1zM6 8h1v1h-1zM8 8h1v1h-1z" fill="#000"/></svg>
<svg style="left:21px;top:1px;opacity:.72" width="9" height="9" viewBox="0 0 9 9"><path d="M1 0h1v1h-1zM5 0h1v1h-1zM1 1h1v1h-1zM4 1h1v1h-1zM5 1h1v1h-1zM6 1h1v1h-1zM7 1h1v1h-1zM0 2h1v1h-1zM1 2h1v1h-1zM2 2h1v1h-1zM4 2h1v1h-1zM6 2h1v1h-1zM0 3h1v1h-1zM2 3h1v1h-1zM5 3h1v1h-1zM7 3h1v1h-1zM0 4h1v1h-1zM2 4h1v1h-1zM4 4h1v1h-1zM5 4h1v1h-1zM6 4h1v1h-1zM7 4h1v1h-1zM0 5h1v1h-1zM2 5h1v1h-1zM5 5h1v1h-1zM0 6h1v1h-1zM1 6h1v1h-1zM2 6h1v1h-1zM4 6h1v1h-1zM5 6h1v1h-1zM6 6h1v1h-1zM7 6h1v1h-1zM4 7h1v1h-1zM6 7h1v1h-1zM2 8h1v1h-1zM3 8h1v1h-1zM4 8h1v1h-1zM5 8h1v1h-1zM6 8h1v1h-1zM7 8h1v1h-1z" fill="#000"/></svg>
<svg style="left:31px;top:1px;opacity:.72" width="9" height="9" viewBox="0 0 9 9"><path d="M0 0h1v1h-1zM1 0h1v1h-1zM2 0h1v1h-1zM4 0h1v1h-1zM6 0h1v1h-1zM7 0h1v1h-1zM8 0h1v1h-1zM1 1h1v1h-1zM4 1h1v1h-1zM7 1h1v1h-1zM1 2h1v1h-1zM3 2h1v1h-1zM4 2h1v1h-1zM7 2h1v1h-1zM0 3h1v1h-1zM1 3h1v1h-1zM2 3h1v1h-1zM4 3h1v1h-1zM6 3h1v1h-1zM7 3h1v1h-1zM8 3h1v1h-1zM1 4h1v1h-1zM4 4h1v1h-1zM7 4h1v1h-1zM1 5h1v1h-1zM3 5h1v1h-1zM7 5h1v1h-1zM1 6h1v1h-1zM2 6h1v1h-1zM4 6h1v1h-1zM7 6h1v1h-1zM0 7h1v1h-1zM1 7h1v1h-1zM4 7h1v1h-1zM6 7h1v1h-1zM7 7h1v1h-1zM8 7h1v1h-1zM3 8h1v1h-1z" fill="#000"/></svg>
<svg style="left:41px;top:1px;opacity:.72" width="9" height="9" viewBox="0 0 9 9"><path d="M1 0h1v1h-1zM4 0h1v1h-1zM2 1h1v1h-1zM4 1h1v1h-1zM5 1h1v1h-1zM6 1h1v1h-1zM7 1h1v1h-1zM8 1h1v1h-1zM3 2h1v1h-1zM7 2h1v1h-1zM3 3h1v1h-1zM5 3h1v1h-1zM7 3h1v1h-1zM1 4h1v1h-1zM5 4h1v1h-1zM0 5h1v1h-1zM5 5h1v1h-1zM4 6h1v1h-1zM6 6h1v1h-1zM3 7h1v1h-1zM7 7h1v1h-1zM1 8h1v1h-1zM2 8h1v1h-1zM8 8h1v1h-1z" fill="#000"/></svg>
<div class="tr" style="left:122px;width:18px"><div class="bx" style="left:1px;width:9px;background:#339966;"></div><span class="tx" style="color:#fff">7
25
standard</span></div>
<div class="tr" style="left:140px;width:16px"><div class="bx" style="left:1px;width:8px;background:#999966;"></div><span class="tx" style="color:#000">8
5
standard</span></div>
<div class="tr" style="left:156px;width:11px;overflow:visible"><div class="bx" style="left:1px;width:9px;background:#339966;"></div><span class="tx" style="color:#fff">8
40
standard</span></div>
</div>
<div style="left:312px;top:292px;width:12px;height:52px;border:2px solid #cc0000"></div>
<div class="hl" style="left:216px;top:39px;height:559px"></div>
<div class="hl" style="left:244px;top:39px;height:559px"></div>
<div class="hl" style="left:272px;top:39px;height:559px"></div>
<div class="hl" style="left:299px;top:39px;height:559px"></div>
<div class="hl" style="left:327px;top:39px;height:559px"></div>
<div class="hl" style="left:355px;top:39px;height:559px"></div>
<div class="hl" style="left:383px;top:39px;height:559px"></div>
<div class="hl" style="left:410px;top:39px;height:559px"></div>
<div class="hl" style="left:438px;top:39px;height:559px"></div>
<div class="hl" style="left:466px;top:39px;height:559px"></div>
<div class="hl" style="left:494px;top:39px;height:559px"></div>
<div class="hl" style="left:521px;top:39px;height:559px"></div>
<div class="hl" style="left:549px;top:39px;height:559px"></div>
<div class="hl" style="left:577px;top:39px;height:559px"></div>
<div class="hl" style="left:605px;top:39px;height:559px"></div>
<div class="hl" style="left:632px;top:39px;height:559px"></div>
<div class="hl" style="left:660px;top:39px;height:559px"></div>
<div class="hl" style="left:688px;top:39px;height:559px"></div>
<div class="hl" style="left:716px;top:39px;height:559px"></div>
<div class="hl" style="left:743px;top:39px;height:559px"></div>
<div class="hl" style="left:771px;top:39px;height:559px"></div>
<div class="hl" style="left:798px;top:39px;height:559px;width:2px"></div>
<div class="hl" style="left:827px;top:39px;height:559px"></div>
<div class="hl" style="left:855px;top:39px;height:559px"></div>
<div class="hl" style="left:882px;top:39px;height:559px"></div>
<div class="hl" style="left:910px;top:39px;height:559px"></div>
<span class="t" style="left:38.2px;top:10.25px;font-size:12.7px;color:#1a1a1a;transform:scaleX(0.9252)">Time Table Editor</span>
<span class="t" style="left:16.6px;top:39.84px;font-size:12px;color:#000;transform:scaleX(0.8727)">Line</span>
<span class="t" style="left:21.6px;top:58.84px;font-size:12px;color:#000;transform:scaleX(0.8982)">43</span>
<span class="t" style="left:36.7px;top:86.04px;font-size:12px;color:#000;transform:scaleX(0.8465)">Create</span>
<span class="t" style="left:32.8px;top:121.84px;font-size:12px;color:#000;transform:scaleX(0.8698)">User is allowed to drive this line</span>
<span class="t" style="left:16.5px;top:143.84px;font-size:12px;color:#000;transform:scaleX(0.7991)">Priority:</span>
<span class="t" style="left:81.5px;top:151.14px;font-size:12px;color:#000;transform:scaleX(0.5981)">1</span>
<span class="t" style="left:192.7px;top:151.14px;font-size:12px;color:#000;transform:scaleX(0.8224)">4</span>
<span class="t" style="left:16.8px;top:183.84px;font-size:12px;color:#000;transform:scaleX(0.9082)">Tour</span>
<span class="t" style="left:21.6px;top:202.84px;font-size:12px;color:#0000ff;transform:scaleX(0.8822)">3</span>
<span class="t" style="left:38.8px;top:230.14px;font-size:12px;color:#000;transform:scaleX(0.8465)">Create</span>
<span class="t" style="left:16.4px;top:256.24px;font-size:12px;color:#000;transform:scaleX(0.8718)">Al-Veh.-Group:</span>
<span class="t" style="left:18.5px;top:275.04px;font-size:12px;color:#000;transform:scaleX(0.9443)">JHNT 5</span>
<span class="t" style="left:16.8px;top:295.84px;font-size:12px;color:#000;transform:scaleX(0.8427)">Conditions:</span>
<span class="t" style="left:32.8px;top:314.14px;font-size:12px;color:#000;transform:scaleX(0.8696)">Mon</span>
<span class="t" style="left:33.2px;top:330.14px;font-size:12px;color:#000;transform:scaleX(0.8995)">Tue</span>
<span class="t" style="left:32.3px;top:346.14px;font-size:12px;color:#000;transform:scaleX(0.9359)">Wed</span>
<span class="t" style="left:33.2px;top:362.14px;font-size:12px;color:#000;transform:scaleX(0.8506)">Thur</span>
<span class="t" style="left:33.2px;top:378.14px;font-size:12px;color:#000;transform:scaleX(0.7500)">Fri</span>
<span class="t" style="left:80.4px;top:314.14px;font-size:12px;color:#000;transform:scaleX(0.8715)">Sat</span>
<span class="t" style="left:80.4px;top:330.14px;font-size:12px;color:#000;transform:scaleX(0.8849)">Sun</span>
<span class="t" style="left:80.4px;top:346.14px;font-size:12px;color:#000;transform:scaleX(0.8643)">Holiday</span>
<span class="t" style="left:144.4px;top:314.14px;font-size:12px;color:#000;transform:scaleX(0.8855)">No Hols</span>
<span class="t" style="left:144.4px;top:330.14px;font-size:12px;color:#000;transform:scaleX(0.8744)">Hols</span>
<span class="t" style="left:16.8px;top:405.84px;font-size:12px;color:#000;transform:scaleX(0.8957)">Trip No. 0</span>
<span class="t" style="left:41.6px;top:453.64px;font-size:12px;color:#000;font-weight:bold;transform:scaleX(1.0186)">Delete</span>
<span class="t" style="left:132.9px;top:453.64px;font-size:12px;color:#000;font-weight:bold;transform:scaleX(0.9964)">NEW</span>
<span class="t" style="left:16.8px;top:486.34px;font-size:12px;color:#000;transform:scaleX(0.8719)">Dep. Time:</span>
<span class="t" style="left:99.9px;top:488.84px;font-size:12px;color:#000;transform:scaleX(0.7626)">6</span>
<span class="t" style="left:139.8px;top:488.84px;font-size:12px;color:#000;transform:scaleX(0.8982)">30</span>
<span class="t" style="left:180.0px;top:488.84px;font-size:12px;color:#000;transform:scaleX(0.9570)">0</span>
<span class="t" style="left:128.3px;top:486.34px;font-size:12px;color:#000;transform:scaleX(0.8075)">:</span>
<span class="t" style="left:168.2px;top:486.34px;font-size:12px;color:#000;transform:scaleX(0.8374)">:</span>
<span class="t" style="left:16.8px;top:510.44px;font-size:12px;color:#000;transform:scaleX(0.8106)">Trip:</span>
<span class="t" style="left:50.6px;top:512.94px;font-size:12px;color:#000;transform:scaleX(0.8728)">ShowAI</span>
<span class="t" style="left:101.4px;top:513.34px;font-size:12px;color:#000;transform:scaleX(0.8739)">43-2</span>
<span class="t" style="left:16.8px;top:533.94px;font-size:12px;color:#000;transform:scaleX(0.8504)">Time Profile:</span>
<span class="t" style="left:101.4px;top:537.14px;font-size:12px;color:#000;transform:scaleX(0.8757)">standard</span>
<span class="t" style="left:16.8px;top:565.84px;font-size:12px;color:#000;transform:scaleX(0.8375)">First Stop:</span>
<span class="t" style="left:71.6px;top:565.84px;font-size:12px;color:#000;transform:scaleX(0.8751)">XinXing GYY</span>
<span class="t" style="left:16.8px;top:582.24px;font-size:12px;color:#000;transform:scaleX(0.8585)">Last Stop:</span>
<span class="t" style="left:72.0px;top:582.24px;font-size:12px;color:#000;transform:scaleX(0.9101)">Jin He Lv You Qu</span>
<span class="t" style="left:16.8px;top:597.94px;font-size:12px;color:#000;transform:scaleX(0.8588)">End Time:</span>
<span class="t" style="left:72.6px;top:597.94px;font-size:12px;color:#000;transform:scaleX(0.8929)">6:53:0</span>
<span class="t" style="left:24.8px;top:614.14px;font-size:12px;color:#000;transform:scaleX(0.8747)">Repeat...</span>
<span class="t" style="left:24.8px;top:637.84px;font-size:12px;color:#000;transform:scaleX(0.8401)">...last</span>
<span class="t" style="left:59.8px;top:632.64px;font-size:12px;color:#000;transform:scaleX(0.7925)">2</span>
<span class="t" style="left:88.8px;top:637.84px;font-size:12px;color:#000;transform:scaleX(0.8326)">entries</span>
<span class="t" style="left:131.8px;top:632.64px;font-size:12px;color:#000;transform:scaleX(0.6280)">1</span>
<span class="t" style="left:152.8px;top:637.84px;font-size:12px;color:#000;transform:scaleX(0.8019)">time...</span>
<span class="t" style="left:24.8px;top:662.04px;font-size:12px;color:#000;transform:scaleX(0.8594)">...with intervall:</span>
<span class="t" style="left:27.9px;top:680.44px;font-size:12px;color:#000;transform:scaleX(0.8683)">60</span>
<span class="t" style="left:80.4px;top:677.74px;font-size:12px;color:#000;transform:scaleX(0.8494)">minutes</span>
<span class="t" style="left:144.0px;top:675.64px;font-size:12px;color:#000;transform:scaleX(0.8540)">Do It!</span>
<span class="t" style="left:228.9px;top:692.64px;font-size:12px;color:#000;transform:scaleX(0.8896)">View Graphic</span>
<span class="t" style="left:431.9px;top:613.14px;font-size:12px;color:#000;transform:scaleX(0.8595)">Zoom (hrs):</span>
<span class="t" style="left:431.9px;top:645.14px;font-size:12px;color:#000;transform:scaleX(0.8489)">Midpoint (hrs):</span>
<span class="t" style="left:456.3px;top:691.84px;font-size:12px;color:#000;transform:scaleX(0.8473)">Close</span>
<span class="t" style="left:512.1px;top:693.84px;font-size:12px;color:#000;font-weight:bold;transform:scaleX(1.0071)">ATTENTION: There is no Cancel! All Changes will be assigned</span>
<span class="t" style="left:866px;top:693.5px;font-size:19px;font-weight:bold;color:#fff;text-shadow:1px 0 #000,-1px 0 #000,0 1px #000,0 -1px #000,1px 1px #000,-1px -1px #000,1px -1px #000,-1px 1px #000,2px 0 #000,-2px 0 #000,0 2px #000,0 -2px #000;transform:scaleX(0.8628)">@Wefans</span>
</body></html>
